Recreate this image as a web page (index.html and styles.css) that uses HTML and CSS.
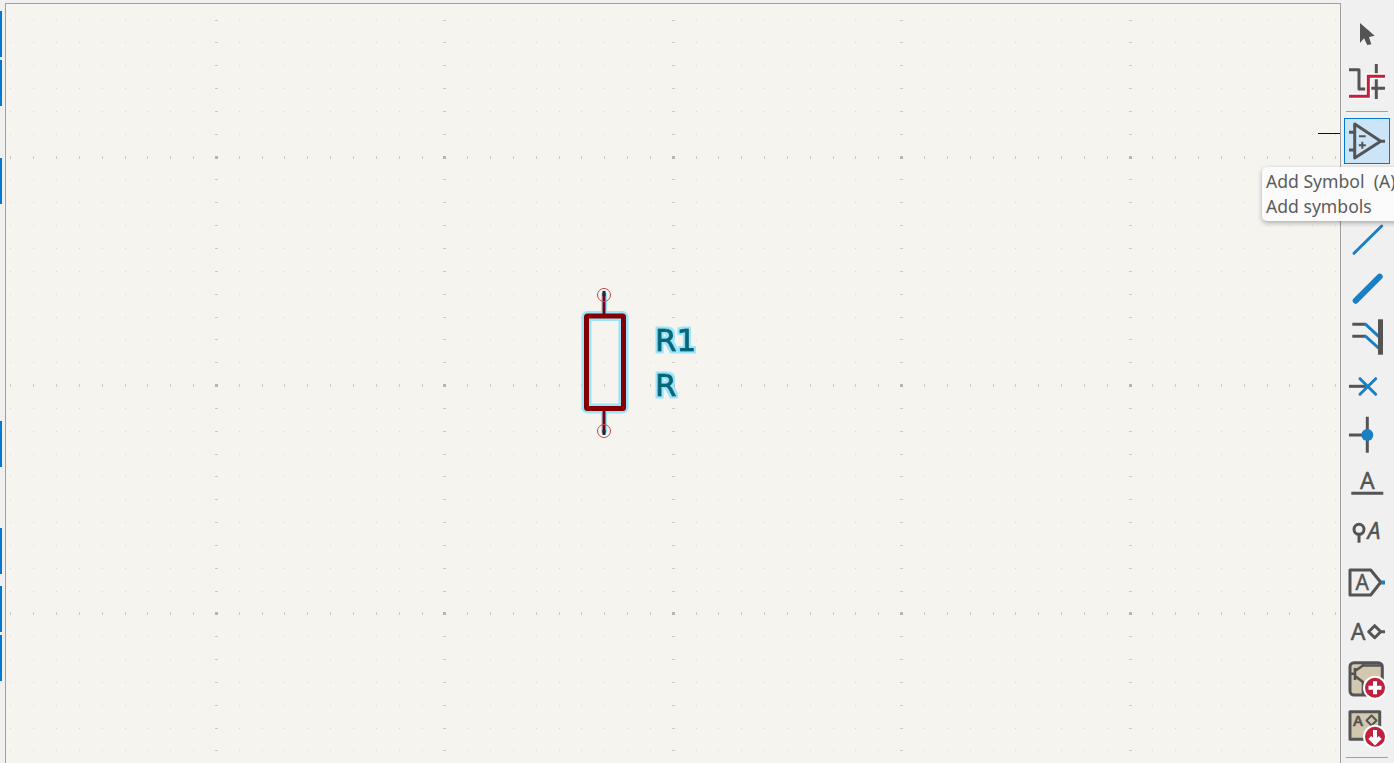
FILE: index.html
```html
<!DOCTYPE html>
<html lang="en">
<head>
    <meta charset="UTF-8">
    <meta name="viewport" content="width=device-width, initial-scale=1.0">
    <title>Schematic Editor</title>
    <link rel="stylesheet" href="styles.css">
</head>
<body>
    <div class="left-strip">
        <div class="clipped-btn m11"></div>
        <div class="clipped-btn m3"></div>
        <div class="clipped-btn m52"></div>
        <div class="clipped-btn m217"></div>
        <div class="clipped-btn m61"></div>
        <div class="clipped-btn m12"></div>
        <div class="clipped-btn m3"></div>
    </div>

    <main class="canvas">
        <svg class="sheet" width="1334" height="759" viewBox="6 4 1334 759">
            <defs>
                <filter id="field-halo" x="-20%" y="-20%" width="140%" height="140%">
                    <feMorphology in="SourceAlpha" operator="dilate" radius="2" result="grown"/>
                    <feFlood flood-color="#9be4fb"/>
                    <feComposite in2="grown" operator="in" result="glow"/>
                    <feMerge>
                        <feMergeNode in="glow"/>
                        <feMergeNode in="SourceGraphic"/>
                    </feMerge>
                </filter>
            </defs>
            <g id="grid"></g>

            <!-- resistor -->
            <path class="halo" d="M604 295V314M604 410V431"/>
            <rect class="halo-body" x="586.5" y="316" width="37" height="92.5" rx="1"/>
            <path class="pin" d="M604 293V314M604 410V433"/>
            <path class="pin-tip" d="M604 291V296M604 430V435"/>
            <rect class="body" x="586.5" y="316" width="37" height="92.5" rx="1"/>
            <circle class="pin-end" cx="604" cy="295" r="6.5"/>
            <circle class="pin-end" cx="604" cy="431" r="6.5"/>
            <text class="field" x="655" y="351">R1</text>
            <text class="field" x="655" y="396">R</text>
        </svg>
        <div class="cursor-line"></div>
    </main>

    <aside class="toolbar">
        <button class="tool">
            <svg width="46" height="46" viewBox="0 0 46 46"><path class="fill" d="M16 12L30.7 24.7 25 26 27.3 33.3 23.3 34 20 27.3 16 32Z"/></svg>
        </button>
        <button class="tool">
            <svg width="46" height="46" viewBox="0 0 46 46">
                <path class="line" d="M5 9.7H15V29H21.7M32.3 4V39M22 28.3H41"/>
                <path class="white-gap" d="M5 36.3H24.3V16.3H41"/>
                <path class="red" d="M5 36.3H24.3V16.3H41"/>
            </svg>
        </button>
        <div class="sep"></div>
        <button class="tool active">
            <svg width="46" height="46" viewBox="0 0 46 46">
                <path class="line" d="M10.7 6L36.7 23.3 10.7 40ZM36.7 23.3H41M5 14.3H10.7M5 32H10.7"/>
                <path class="line thin" d="M15 18.3H21.7M14.8 27.3H21.8M18.3 23.8V30.8"/>
            </svg>
        </button>
        <!-- this one sits under the tooltip -->
        <button class="tool covered"></button>
        <button class="tool">
            <svg width="46" height="46" viewBox="0 0 46 46"><path class="blue" d="M10 36.3L37.7 9"/></svg>
        </button>
        <button class="tool">
            <svg width="46" height="46" viewBox="0 0 46 46"><path class="blue wide" d="M11.7 34.7L35.7 10.7"/></svg>
        </button>
        <button class="tool">
            <svg width="46" height="46" viewBox="0 0 46 46">
                <path class="line" d="M8.3 9.3H21.7M8.3 21.3H21.7"/>
                <path class="blue" d="M21.7 9.3L36.7 23.3M21.7 21.3L36.7 35"/>
                <rect class="fill" x="34" y="4.3" width="5" height="35.4"/>
            </svg>
        </button>
        <button class="tool">
            <svg width="46" height="46" viewBox="0 0 46 46">
                <path class="line" d="M5 22.3H23.3"/>
                <path class="blue" d="M16 14.7L31.7 30.3M31.7 14.7L16 30.3"/>
            </svg>
        </button>
        <button class="tool">
            <svg width="46" height="46" viewBox="0 0 46 46">
                <path class="line" d="M23.3 3.7V39.7M5 22H23.3"/>
                <circle class="blue-fill" cx="23.3" cy="22" r="6"/>
            </svg>
        </button>
        <button class="tool">
            <svg width="46" height="46" viewBox="0 0 46 46">
                <text class="glyph" x="23.3" y="27.3" text-anchor="middle">A</text>
                <path class="line" d="M7.3 31.3H39.3"/>
            </svg>
        </button>
        <button class="tool">
            <svg width="46" height="46" viewBox="0 0 46 46">
                <circle class="line" cx="15" cy="18.3" r="5"/>
                <path class="line" d="M15 23.3V31.7"/>
                <text class="glyph italic" x="30" y="28" text-anchor="middle">A</text>
            </svg>
        </button>
        <button class="tool">
            <svg width="46" height="46" viewBox="0 0 46 46">
                <path class="line" d="M6 10H26.7L36.7 22.3 26.7 35H6Z"/>
                <rect class="blue-fill" x="37" y="20.5" width="4" height="4"/>
                <text class="glyph small" x="18.3" y="30" text-anchor="middle">A</text>
            </svg>
        </button>
        <button class="tool">
            <svg width="46" height="46" viewBox="0 0 46 46">
                <text class="glyph" x="14" y="31" text-anchor="middle">A</text>
                <path class="line" d="M30.7 16.7L36.7 22.7 30.7 28.7 24.7 22.7ZM36.7 22.7H41"/>
            </svg>
        </button>
        <button class="tool">
            <svg width="46" height="46" viewBox="0 0 46 46">
                <rect class="line tan" x="6" y="4.7" width="32.3" height="32.3" rx="4"/>
                <path class="line mid" d="M11 10V22M6 15.7H11M11 13L19 7.5H38M19 4.7V7.5M11 18L19 24V37"/>
                <circle class="badge" cx="31" cy="29.7" r="11"/>
                <path class="badge-mark" d="M24.5 29.7H37.5M31 23.2V36.2"/>
            </svg>
        </button>
        <button class="tool">
            <svg width="46" height="46" viewBox="0 0 46 46">
                <rect class="line tan" x="6" y="4.7" width="29.7" height="27.6"/>
                <text class="glyph tiny" x="14" y="18.5" text-anchor="middle">A</text>
                <path class="line thin" d="M27.5 8.5L32.5 13.5 27.5 18.5 22.5 13.5Z"/>
                <circle class="badge" cx="31" cy="29.7" r="11"/>
                <path class="badge-mark" d="M31 23V35.5M25.8 30.5L31 35.7 36.2 30.5"/>
            </svg>
        </button>
        <div class="sep sep-end"></div>
    </aside>

    <div class="tooltip">
        <div>Add Symbol&nbsp; (A)</div>
        <div>Add symbols</div>
    </div>

    <script src="grid.js"></script>
</body>
</html>
```

FILE: styles.css
```css
html, body {
    margin: 0;
    height: 100%;
    overflow: hidden;
}
body {
    display: flex;
    background-color: #f0f0f0;
    font-family: "Noto Sans", sans-serif;
}

/* the toolbar at the left is cut off by the window, only the button edges show */
.left-strip {
    width: 5px;
    flex: none;
}
.clipped-btn {
    width: 2px;
    height: 46px;
    box-sizing: border-box;
    border: 1px solid #0078d4;
    border-right-width: 2px;
    border-left: none;
}
.m11 { margin-top: 11px; }
.m3 { margin-top: 3px; }
.m52 { margin-top: 52px; }
.m217 { margin-top: 217px; }
.m61 { margin-top: 61px; }
.m12 { margin-top: 12px; }

.canvas {
    position: relative;
    width: 1334px;
    height: 760px;
    flex: none;
    margin-top: 3px;
    background-color: #f5f4ef;
    border: 1px solid #a0a0a0;
    border-bottom: none;
}
.sheet {
    display: block;
}
.cursor-line {
    position: absolute;
    left: 1312px;
    top: 129px;
    width: 22px;
    height: 1px;
    background-color: #111;
}

.grid-dot { fill: #d6d6d2; }
.grid-tick { fill: #c8c8c4; }
.grid-major { fill: #b4b4b0; }

.halo, .halo-body {
    fill: none;
    stroke: #9be4fb;
    stroke-linecap: round;
}
.halo { stroke-width: 6; }
.halo-body { stroke-width: 10; stroke-linejoin: round; }
.pin {
    fill: none;
    stroke: #7a0010;
    stroke-width: 3;
}
.pin-tip {
    fill: none;
    stroke: #1c2a3a;
    stroke-width: 3;
}
.body {
    fill: none;
    stroke: #840000;
    stroke-width: 5;
}
.pin-end {
    fill: none;
    stroke: #b85050;
    stroke-width: 1;
}
.field {
    font-family: "DejaVu Sans", sans-serif;
    font-size: 31px;
    fill: #00687a;
    stroke: #00687a;
    stroke-width: 1;
    stroke-linejoin: round;
    filter: url(#field-halo);
}

.toolbar {
    flex: none;
    width: 46px;
    margin-left: 3px;
    padding-top: 11px;
}
.tool {
    display: block;
    width: 46px;
    height: 46px;
    margin: 0 0 3px;
    padding: 0;
    background: none;
    border: none;
    box-sizing: border-box;
}
.tool svg {
    display: block;
}
.tool.active {
    background-color: #cce4f7;
    outline: 1px solid #0078d4;
    outline-offset: -1px;
}
.tool.covered {
    height: 47px;
}
.sep {
    height: 1px;
    margin: 5px 2px 6px;
    background-color: #a0a0a0;
}
.sep-end {
    margin-top: 4px;
}

.fill { fill: #545454; }
.line {
    fill: none;
    stroke: #545454;
    stroke-width: 3;
    stroke-linejoin: round;
}
.line.thin { stroke-width: 2; }
.line.mid { stroke-width: 2.6; }
.line.tan { fill: #d2c8b0; }
.white-gap {
    fill: none;
    stroke: #fff;
    stroke-width: 6;
}
.red {
    fill: none;
    stroke: #c1213f;
    stroke-width: 3;
}
.blue {
    fill: none;
    stroke: #1a7fc4;
    stroke-width: 3;
    stroke-linecap: round;
}
.blue.wide { stroke-width: 6; }
.blue-fill { fill: #1a7fc4; }
.glyph {
    font-family: "Noto Sans", sans-serif;
    font-size: 23px;
    fill: #545454;
    stroke: #545454;
    stroke-width: 0.4;
}
.glyph.italic { font-style: italic; }
.glyph.small { font-size: 21px; }
.glyph.tiny { font-size: 15px; font-weight: 600; }
.badge {
    fill: #c1213f;
    stroke: #fff;
    stroke-width: 2;
}
.badge-mark {
    fill: none;
    stroke: #fff;
    stroke-width: 4;
}

.tooltip {
    position: absolute;
    left: 1262px;
    top: 167px;
    width: 140px;
    height: 54px;
    padding: 2px 0 0 4px;
    box-sizing: border-box;
    background-color: #fbfbfb;
    border-radius: 5px;
    box-shadow: 0 2px 5px rgba(0, 0, 0, 0.3);
    color: #5c5c5c;
    font-size: 17.6px;
    line-height: 25px;
    white-space: nowrap;
}
```

FILE: grid.js
```js
// draws the schematic grid, 1 dot per cell, with heavier ticks every 10 cells
const pitch = 22.84;
const grid = document.getElementById('grid');

function addDot(x, y, w, h, cls) {
    const dot = document.createElementNS('http://www.w3.org/2000/svg', 'rect');
    dot.setAttribute('x', x);
    dot.setAttribute('y', y);
    dot.setAttribute('width', w);
    dot.setAttribute('height', h);
    dot.setAttribute('class', cls);
    grid.appendChild(dot);
}

for (let col = 0; col < 59; col++) {
    for (let row = 0; row < 33; row++) {
        const x = Math.round(10.4 + col * pitch);
        const y = Math.round(19.6 + row * pitch);
        const majorCol = col % 10 === 9;
        const majorRow = row % 10 === 6;

        if (majorCol && majorRow) {
            addDot(x - 1, y - 1, 3, 3, 'grid-major');
        } else if (majorCol) {
            addDot(x - 1, y, 3, 1, 'grid-tick');
        } else if (majorRow) {
            addDot(x, y - 1, 1, 3, 'grid-tick');
        } else {
            addDot(x, y, 1, 1, 'grid-dot');
        }
    }
}
```
